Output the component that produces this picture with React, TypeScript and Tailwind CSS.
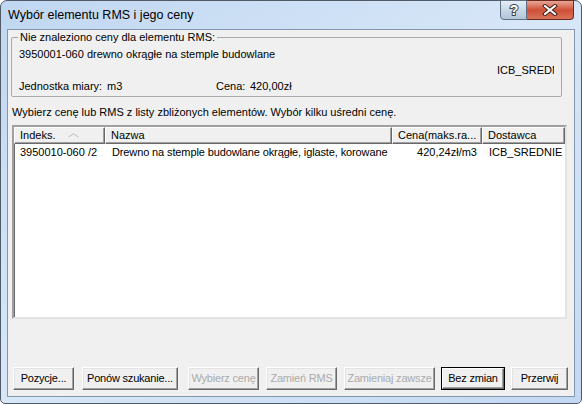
import React from 'react';

// Windows 7 style dialog: "Wybór elementu RMS i jego ceny"

const ui = "font-['Liberation_Sans',Arial,sans-serif] text-[11px] leading-[13px] text-black";

type BtnProps = {
  label: string;
  width: string;
  disabled?: boolean;
  isDefault?: boolean;
};

const Btn: React.FC<BtnProps> = ({ label, width, disabled, isDefault }) => {
  if (isDefault) {
    return (
      <div className={`${width} h-[23px] border border-black`}>
        <div className="h-full border border-t-white border-l-white border-r-[#696969] border-b-[#696969] bg-[#f0f0f0] shadow-[inset_-1px_-1px_0_#a0a0a0] flex items-center justify-center whitespace-nowrap tracking-[-0.2px]">
          {label}
        </div>
      </div>
    );
  }
  return (
    <div
      className={`${width} h-[23px] border border-t-white border-l-white border-r-[#696969] border-b-[#696969] bg-[#f0f0f0] shadow-[inset_-1px_-1px_0_#a0a0a0,inset_1px_1px_0_#e3e3e3] flex items-center justify-center whitespace-nowrap tracking-[-0.2px] ${
        disabled ? 'text-[#ababab]' : 'text-black'
      }`}
    >
      {label}
    </div>
  );
};

const HeaderCell: React.FC<{ width: string; children: React.ReactNode }> = ({ width, children }) => (
  <div className={`${width} h-[17px] shrink-0 border border-t-white border-l-white border-r-[#696969] border-b-[#696969] shadow-[inset_-1px_-1px_0_#a0a0a0] bg-[#f0f0f0] flex items-center pl-[5px] whitespace-nowrap overflow-hidden`}>
    {children}
  </div>
);

export default function App() {
  return (
    <div className={`w-[582px] h-[404px] bg-white ${ui}`}>
      <div className="h-full flex flex-col rounded-t-[7px] rounded-b-[5px] border border-[#4f5b69] bg-linear-to-br from-[#c0d7f1] via-[#d8e7f8] to-[#c3d9f2]">
        {/* Title bar */}
        <div className="h-[28px] flex items-start">
          <span className="pl-[7px] pt-[7px] font-['Liberation_Sans',Arial,sans-serif] text-[12.5px] leading-[15px] text-black">
            Wybór elementu RMS i jego ceny
          </span>
          <div className="ml-auto mr-[7px] -mt-px flex">
            {/* help */}
            <div className="w-[27px] h-[20px] rounded-bl-[4px] border border-[#5f7084] bg-linear-to-b from-[#e6eef7] via-[#c9d8e8] to-[#b3c6da] flex items-center justify-center">
              <svg width="12" height="14" viewBox="0 0 12 14">
                <text x="6" y="12" textAnchor="middle" fontFamily="Liberation Sans, Arial, sans-serif" fontWeight="700" fontSize="14" fill="#fff" stroke="#3c4654" strokeWidth="2" paintOrder="stroke">?</text>
              </svg>
            </div>
            {/* close */}
            <div className="w-[47px] h-[20px] rounded-br-[4px] border border-l-0 border-[#6b2a20] bg-linear-to-b from-[#e7a595] via-[#cf4f36] to-[#d9715b] flex items-center justify-center">
              <svg width="16" height="12" viewBox="0 0 16 12">
                <path d="M3 2 L13 10 M13 2 L3 10" stroke="#3a1d18" strokeWidth="4" strokeLinecap="square" />
                <path d="M3 2 L13 10 M13 2 L3 10" stroke="#fff" strokeWidth="2" strokeLinecap="square" />
              </svg>
            </div>
          </div>
        </div>

        {/* Client area */}
        <div className="mx-[6px] mb-[6px] flex-1 border border-[#8396ab] bg-[#f0f0f0] flex flex-col">
          {/* Group box */}
          <div className="relative mt-[7px] ml-[3px] w-[551px] h-[60px] border border-[#a9a9a9] rounded-[2px] shrink-0">
            <span className="absolute -top-[7px] left-[6px] bg-[#f0f0f0] px-[2px]">
              Nie znaleziono ceny dla elementu RMS:
            </span>
            <div className="pl-[7px] pt-[10px]">3950001-060 drewno okrągłe na stemple budowlane</div>
            <div className="flex justify-end pr-[7px] pt-[3px]">
              <div className="w-[57px] overflow-hidden whitespace-nowrap">ICB_SREDNIE</div>
            </div>
            <div className="flex pl-[7px] pt-[3px]">
              <span className="w-[88px]">Jednostka miary:</span>
              <span className="w-[109px]">m3</span>
              <span className="w-[34px]">Cena:</span>
              <span>420,00zł</span>
            </div>
          </div>

          {/* Instruction */}
          <div className="pl-[4px] mt-[9px]">
            Wybierz cenę lub RMS z listy zbliżonych elementów. Wybór kilku uśredni cenę.
          </div>

          {/* List view */}
          <div className="ml-[4px] mt-[6px] w-[555px] h-[194px] shrink-0 border-2 border-t-[#a0a0a0] border-l-[#a0a0a0] border-r-[#e3e3e3] border-b-[#e3e3e3] shadow-[inset_1px_1px_0_#696969] bg-white flex flex-col overflow-hidden">
            <div className="flex">
              <HeaderCell width="w-[91px]">
                <span className="w-[48px]">Indeks.</span>
                <svg width="11" height="5" viewBox="0 0 11 5">
                  <path d="M0.5 4 L5.5 0.8 L10.5 4" fill="none" stroke="#bdbdbd" strokeWidth="1" />
                </svg>
              </HeaderCell>
              <HeaderCell width="w-[287px]">Nazwa</HeaderCell>
              <HeaderCell width="w-[90px]">Cena(maks.ra...</HeaderCell>
              <HeaderCell width="w-[83px]">Dostawca</HeaderCell>
            </div>
            <div className="flex h-[17px] items-center whitespace-nowrap">
              <div className="w-[91px] pl-[6px]">3950010-060 /2</div>
              <div className="w-[287px] pl-[7px] tracking-[-0.12px]">Drewno na stemple budowlane okrągłe, iglaste, korowane</div>
              <div className="w-[90px] pr-[5px] text-right">420,24zł/m3</div>
              <div className="w-[83px] pl-[7px]">ICB_SREDNIE</div>
            </div>
          </div>

          {/* Buttons */}
          <div className="mt-auto mb-[6px] ml-[5px] flex">
            <Btn label="Pozycje..." width="w-[61px]" />
            <div className="w-[8px]" />
            <Btn label="Ponów szukanie..." width="w-[96px]" />
            <div className="w-[10px]" />
            <Btn label="Wybierz cenę" width="w-[71px]" disabled />
            <div className="w-[7px]" />
            <Btn label="Zamień RMS" width="w-[71px]" disabled />
            <div className="w-[7px]" />
            <Btn label="Zamieniaj zawsze" width="w-[91px]" disabled />
            <div className="w-[6px]" />
            <Btn label="Bez zmian" width="w-[64px]" isDefault />
            <div className="w-[6px]" />
            <Btn label="Przerwij" width="w-[57px]" />
          </div>
        </div>
      </div>
    </div>
  );
}
